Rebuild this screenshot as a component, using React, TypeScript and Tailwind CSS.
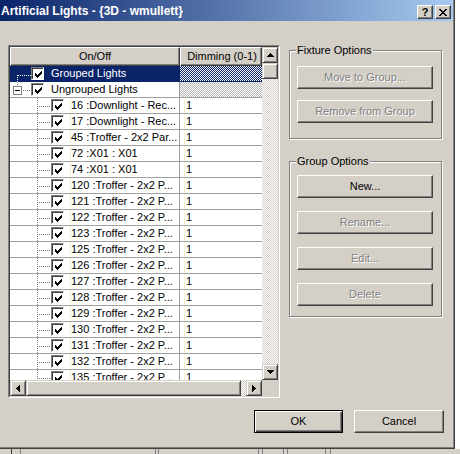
import React from "react";

const FONT = "font-['Liberation_Sans',Arial,sans-serif]";
const CHECKER_GRAY = "bg-[image:repeating-conic-gradient(#d4d0c8_0_25%,#ffffff_0_50%)] bg-[length:2px_2px]";
const PUSH =
  "border border-t-white border-l-white border-r-[#404040] border-b-[#404040] shadow-[inset_-1px_-1px_0_#808080]";
const SCROLLBTN =
  "border border-t-[#d4d0c8] border-l-[#d4d0c8] border-r-[#404040] border-b-[#404040] shadow-[inset_1px_1px_0_#ffffff,inset_-1px_-1px_0_#808080] bg-[#d4d0c8]";

function CheckGlyph() {
  return (
    <svg width="7" height="7" viewBox="0 0 7 7" shapeRendering="crispEdges">
      <path
        d="M0 2h1v3H0z M1 3h1v3H1z M2 4h1v3H2z M3 3h1v3H3z M4 2h1v3H4z M5 1h1v3H5z M6 0h1v3H6z"
        fill="#000"
      />
    </svg>
  );
}

function CheckBox() {
  return (
    <span className="w-[13px] h-[13px] shrink-0 bg-white border border-t-[#808080] border-l-[#808080] border-r-white border-b-white shadow-[inset_1px_1px_0_#404040] flex items-center justify-center pl-[1px] pt-[1px]">
      <CheckGlyph />
    </span>
  );
}

function Arrow({ dir }: { dir: "up" | "down" | "left" | "right" }) {
  const d =
    dir === "up"
      ? "M3 0h1v1H3z M2 1h3v1H2z M1 2h5v1H1z M0 3h7v1H0z"
      : dir === "down"
      ? "M0 0h7v1H0z M1 1h5v1H1z M2 2h3v1H2z M3 3h1v1H3z"
      : dir === "left"
      ? "M0 3h1v1H0z M1 2h1v3H1z M2 1h1v5H2z M3 0h1v7H3z"
      : "M0 0h1v7H0z M1 1h1v5H1z M2 2h1v3H2z M3 3h1v1H3z";
  const w = dir === "up" || dir === "down" ? 7 : 4;
  const h = dir === "up" || dir === "down" ? 4 : 7;
  return (
    <svg width={w} height={h} viewBox={`0 0 ${w} ${h}`} shapeRendering="crispEdges">
      <path d={d} fill="#000" />
    </svg>
  );
}

function Connector({ kind, sel }: { kind: "grouped" | "ungrouped" | "child"; sel?: boolean }) {
  const c = sel ? "#ffffff" : "#808080";
  if (kind === "grouped")
    return (
      <svg width="21" height="16" className="shrink-0 self-start" shapeRendering="crispEdges">
        <line x1="7.5" y1="9" x2="7.5" y2="16" stroke={c} strokeDasharray="1 1" />
        <line x1="8" y1="9.5" x2="21" y2="9.5" stroke={c} strokeDasharray="1 1" />
      </svg>
    );
  if (kind === "ungrouped")
    return (
      <svg width="21" height="15" className="shrink-0 self-start" shapeRendering="crispEdges">
        <line x1="7.5" y1="0" x2="7.5" y2="4" stroke={c} strokeDasharray="1 1" />
        <rect x="3.5" y="4.5" width="8" height="8" fill="#fff" stroke="#808080" />
        <line x1="5" y1="8.5" x2="10" y2="8.5" stroke="#000" />
        <line x1="13" y1="8.5" x2="21" y2="8.5" stroke={c} strokeDasharray="1 1" />
      </svg>
    );
  return (
    <svg width="41" height="16" className="shrink-0 self-start" shapeRendering="crispEdges">
      <line x1="27.5" y1="0" x2="27.5" y2="16" stroke={c} strokeDasharray="1 1" />
      <line x1="29" y1="8.5" x2="41" y2="8.5" stroke={c} strokeDasharray="1 1" />
    </svg>
  );
}

const children = [
  "16 :Downlight - Rec...",
  "17 :Downlight - Rec...",
  "45 :Troffer - 2x2 Par...",
  "72 :X01 : X01",
  "74 :X01 : X01",
  "120 :Troffer - 2x2 P...",
  "121 :Troffer - 2x2 P...",
  "122 :Troffer - 2x2 P...",
  "123 :Troffer - 2x2 P...",
  "125 :Troffer - 2x2 P...",
  "126 :Troffer - 2x2 P...",
  "127 :Troffer - 2x2 P...",
  "128 :Troffer - 2x2 P...",
  "129 :Troffer - 2x2 P...",
  "130 :Troffer - 2x2 P...",
  "131 :Troffer - 2x2 P...",
  "132 :Troffer - 2x2 P...",
  "135 :Troffer - 2x2 P...",
];

function Btn({
  children,
  disabled,
  def,
  className = "",
}: {
  children: React.ReactNode;
  disabled?: boolean;
  def?: boolean;
  className?: string;
}) {
  const frame = def
    ? "border border-black shadow-[inset_1px_1px_0_#ffffff,inset_-1px_-1px_0_#404040,inset_-2px_-2px_0_#808080]"
    : PUSH;
  const txt = disabled ? "text-[#808080] [text-shadow:1px_1px_0_#ffffff]" : "text-black";
  return (
    <div className={`h-[23px] flex items-center justify-center text-[11px] bg-[#d4d0c8] ${frame} ${txt} ${className}`}>
      {children}
    </div>
  );
}

function GroupBox({
  title,
  children,
  className = "",
}: {
  title: string;
  children: React.ReactNode;
  className?: string;
}) {
  return (
    <div
      className={`relative w-[153px] border border-[#808080] shadow-[inset_1px_1px_0_#ffffff,1px_1px_0_#ffffff] ${className}`}
    >
      <span className="absolute -top-[7px] left-[6px] px-[1px] bg-[#d4d0c8] text-[11px] leading-[13px] text-black whitespace-nowrap">
        {title}
      </span>
      {children}
    </div>
  );
}

export default function App() {
  return (
    <div className={`w-[460px] h-[454px] bg-white overflow-hidden flex flex-col ${FONT}`}>
      <div className="w-[455px] h-[449px] shrink-0 flex flex-col bg-[#d4d0c8] border-r border-b border-r-[#404040] border-b-[#404040] shadow-[inset_-1px_-1px_0_#808080] pr-[1px] pb-[1px]">
        {/* Title bar */}
        <div className="h-[21px] shrink-0 flex bg-[linear-gradient(to_right,#0a246a,#a6caf0)]">
          <div className="flex-1 flex items-center pl-[1px] text-white font-bold text-[12px] leading-none whitespace-nowrap">
            Artificial Lights - {"{"}3D - wmullett{"}"}
          </div>
          <div className="self-start mt-[5px] mr-[2px] flex gap-[2px]">
            <div className={`w-[16px] h-[14px] flex items-center justify-center ${PUSH} bg-[#d4d0c8]`}>
              <span className="text-[11px] font-bold leading-none text-black">?</span>
            </div>
            <div className={`w-[16px] h-[14px] flex items-center justify-center ${PUSH} bg-[#d4d0c8]`}>
              <svg width="8" height="7" viewBox="0 0 8 7" shapeRendering="crispEdges">
                <path
                  d="M0 0h2v1H0z M6 0h2v1H6z M1 1h2v1H1z M5 1h2v1H5z M2 2h4v1H2z M3 3h2v1H3z M2 4h4v1H2z M1 5h2v1H1z M5 5h2v1H5z M0 6h2v1H0z M6 6h2v1H6z"
                  fill="#000"
                />
              </svg>
            </div>
          </div>
        </div>

        {/* Body */}
        <div className="flex-1 flex flex-col pt-[24px] pl-[8px]">
          <div className="flex items-start">
            {/* Grid panel */}
            <div className="w-[272px] h-[353px] shrink-0 border border-t-[#808080] border-l-[#808080] border-r-white border-b-white">
              <div className="w-full h-full border border-t-[#404040] border-l-[#404040] border-r-[#d4d0c8] border-b-[#d4d0c8] flex flex-col">
                <div className="flex flex-1 min-h-0">
                  <div className="w-[252px] flex flex-col overflow-hidden bg-white">
                    {/* header */}
                    <div className="h-[19px] shrink-0 flex text-[11px] text-black">
                      <div className={`w-[170px] flex items-center justify-center bg-[#d4d0c8] ${PUSH}`}>On/Off</div>
                      <div className={`flex-1 flex items-center justify-center pl-[2px] whitespace-nowrap bg-[#d4d0c8] ${PUSH}`}>
                        Dimming (0-1)
                      </div>
                    </div>
                    {/* rows */}
                    <div className="flex-1 overflow-hidden text-[11px] leading-[15px]">
                      {/* Grouped */}
                      <div className="h-[16px] flex border-b border-[#0a246a]">
                        <div className="w-[170px] flex items-center bg-[#0a246a] text-white">
                          <Connector kind="grouped" sel />
                          <CheckBox />
                          <span className="ml-[7px] whitespace-nowrap">Grouped Lights</span>
                        </div>
                        <div className="flex-1 bg-[image:repeating-conic-gradient(#0a246a_0_25%,#ffffff_0_50%)] bg-[length:2px_2px]" />
                      </div>
                      {/* Ungrouped */}
                      <div className="h-[16px] flex border-b border-[#a0a0a0]">
                        <div className="w-[170px] flex items-center border-r border-[#a0a0a0]">
                          <Connector kind="ungrouped" />
                          <CheckBox />
                          <span className="ml-[7px] whitespace-nowrap">Ungrouped Lights</span>
                        </div>
                        <div className="flex-1 bg-[image:repeating-conic-gradient(#b8b8b8_0_25%,#ffffff_0_50%)] bg-[length:2px_2px]" />
                      </div>
                      {children.map((c) => (
                        <div key={c} className="h-[16px] flex border-b border-[#a0a0a0]">
                          <div className="w-[170px] flex items-center border-r border-[#a0a0a0] overflow-hidden">
                            <Connector kind="child" />
                            <CheckBox />
                            <span className="ml-[6px] w-[1px] self-stretch bg-[#f3efcf]" />
                            <span className="whitespace-nowrap">{c}</span>
                          </div>
                          <div className="flex-1 flex items-center">
                            <span className="ml-[4px] w-[1px] self-stretch bg-[#f3efcf]" />
                            <span className="pl-[1px]">1</span>
                          </div>
                        </div>
                      ))}
                    </div>
                  </div>
                  {/* vertical scrollbar */}
                  <div className="w-[16px] flex flex-col">
                    <div className={`h-[16px] shrink-0 flex items-center justify-center ${SCROLLBTN}`}>
                      <Arrow dir="up" />
                    </div>
                    <div className={`h-[16px] shrink-0 ${SCROLLBTN}`} />
                    <div className={`flex-1 ${CHECKER_GRAY}`} />
                    <div className={`h-[16px] shrink-0 flex items-center justify-center ${SCROLLBTN}`}>
                      <Arrow dir="down" />
                    </div>
                  </div>
                </div>
                {/* horizontal scrollbar */}
                <div className="h-[16px] shrink-0 flex">
                  <div className="w-[252px] flex">
                    <div className={`w-[16px] shrink-0 flex items-center justify-center ${SCROLLBTN}`}>
                      <Arrow dir="left" />
                    </div>
                    <div className={`w-[215px] shrink-0 ${SCROLLBTN}`} />
                    <div className={`flex-1 ${CHECKER_GRAY}`} />
                    <div className={`w-[16px] shrink-0 flex items-center justify-center ${SCROLLBTN}`}>
                      <Arrow dir="right" />
                    </div>
                  </div>
                  <div className="w-[16px] bg-[#d4d0c8]" />
                </div>
              </div>
            </div>

            {/* Right column */}
            <div className="ml-[9px] mt-[5px] flex flex-col">
              <GroupBox title="Fixture Options" className="h-[89px]">
                <div className="pt-[15px] pl-[7px] flex flex-col gap-[11px]">
                  <Btn disabled className="w-[136px]">Move to Group...</Btn>
                  <Btn disabled className="w-[136px]">Remove from Group</Btn>
                </div>
              </GroupBox>
              <GroupBox title="Group Options" className="h-[156px] mt-[22px]">
                <div className="pt-[13px] pl-[7px] flex flex-col gap-[13px]">
                  <Btn className="w-[136px]">New...</Btn>
                  <Btn disabled className="w-[136px]">Rename...</Btn>
                  <Btn disabled className="w-[136px]">Edit...</Btn>
                  <Btn disabled className="w-[136px]">Delete</Btn>
                </div>
              </GroupBox>
            </div>
          </div>

          {/* OK / Cancel */}
          <div className="mt-[12px] flex justify-end gap-[11px] pr-[9px]">
            <Btn def className="w-[89px]">OK</Btn>
            <Btn className="w-[90px]">Cancel</Btn>
          </div>
        </div>
      </div>

      {/* Strip below the dialog */}
      <div className="flex-1 flex bg-[#d4d0c8]">
        <div className="w-[11px]" />
        <div className="w-[9px] border-l border-[#404040]" />
        <div className="w-[135px] border-l border-[#808080]" />
        <div className="w-[3px] border-l border-[#808080]" />
        <div className="w-[100px] border-l border-[#808080]" />
        <div className="w-[4px] border-l border-[#808080]" />
        <div className="w-[21px] border-l border-[#808080]" />
        <div className="w-[4px] border-l border-[#808080]" />
        <div className="w-[38px] border-l border-[#808080]" />
        <div className="w-[5px] border-l border-[#808080]" />
        <div className="flex-1 border-l border-[#808080]" />
      </div>
    </div>
  );
}
